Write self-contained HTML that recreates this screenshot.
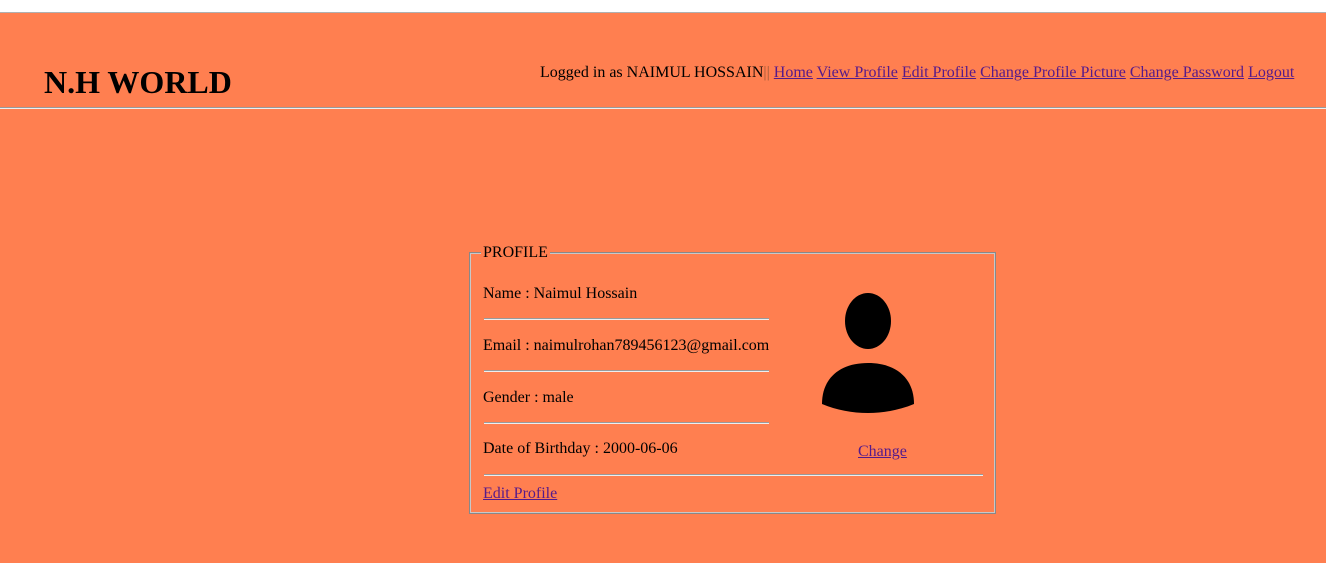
<!DOCTYPE html>
<html><head><meta charset="utf-8"><style>
*{margin:0;padding:0}
body{width:1326px;height:563px;background:#FF7F50;font-family:"Liberation Serif",serif;font-size:16px;color:#000;position:relative;overflow:hidden}
.a{position:absolute;white-space:nowrap}
a{color:#551A8B;text-decoration:underline}
.hr{position:absolute;height:0;border-top:1px solid #9a9a9a;border-bottom:1px solid #eee}
</style></head><body>
<div class="a" style="left:0;top:0;width:1326px;height:12px;background:#fff;border-bottom:1px solid #b0b0b0"></div>
<div class="a" style="left:44px;top:64px;font-size:32px;font-weight:bold">N.H WORLD</div>
<div class="a" style="left:540px;top:64px">Logged in as NAIMUL HOSSAIN<span style="color:#a05a3a">||</span> <a>Home</a> <a>View Profile</a> <a>Edit Profile</a> <a>Change Profile Picture</a> <a>Change Password</a> <a>Logout</a></div>
<div class="hr" style="left:0;top:107px;width:1326px"></div>
<div class="a" style="left:469px;top:252px;width:525px;height:260px;border:1px solid #888;box-shadow:inset 0 0 0 1px #c8c8c8"></div>
<div class="a" style="left:481px;top:244px;background:#FF7F50;padding:0 2px">PROFILE</div>
<div class="a" style="left:483px;top:285px">Name : Naimul Hossain</div>
<div class="hr" style="left:484px;top:318px;width:285px"></div>
<div class="a" style="left:483px;top:337px">Email : naimulrohan789456123@gmail.com</div>
<div class="hr" style="left:484px;top:370px;width:285px"></div>
<div class="a" style="left:483px;top:389px">Gender : male</div>
<div class="hr" style="left:484px;top:422px;width:285px"></div>
<div class="a" style="left:483px;top:440px">Date of Birthday : 2000-06-06</div>
<div class="hr" style="left:484px;top:474px;width:499px"></div>
<a class="a" style="left:483px;top:485px">Edit Profile</a>
<a class="a" style="left:858px;top:443px">Change</a>
<svg class="a" style="left:820px;top:292px" width="96" height="124">
<ellipse cx="48" cy="29" rx="23" ry="28" fill="#000"/>
<path d="M2 112 C2 86 20 71 48 71 C76 71 94 86 94 112 C65 124 31 124 2 112 Z" fill="#000"/>
</svg>
</body></html>
